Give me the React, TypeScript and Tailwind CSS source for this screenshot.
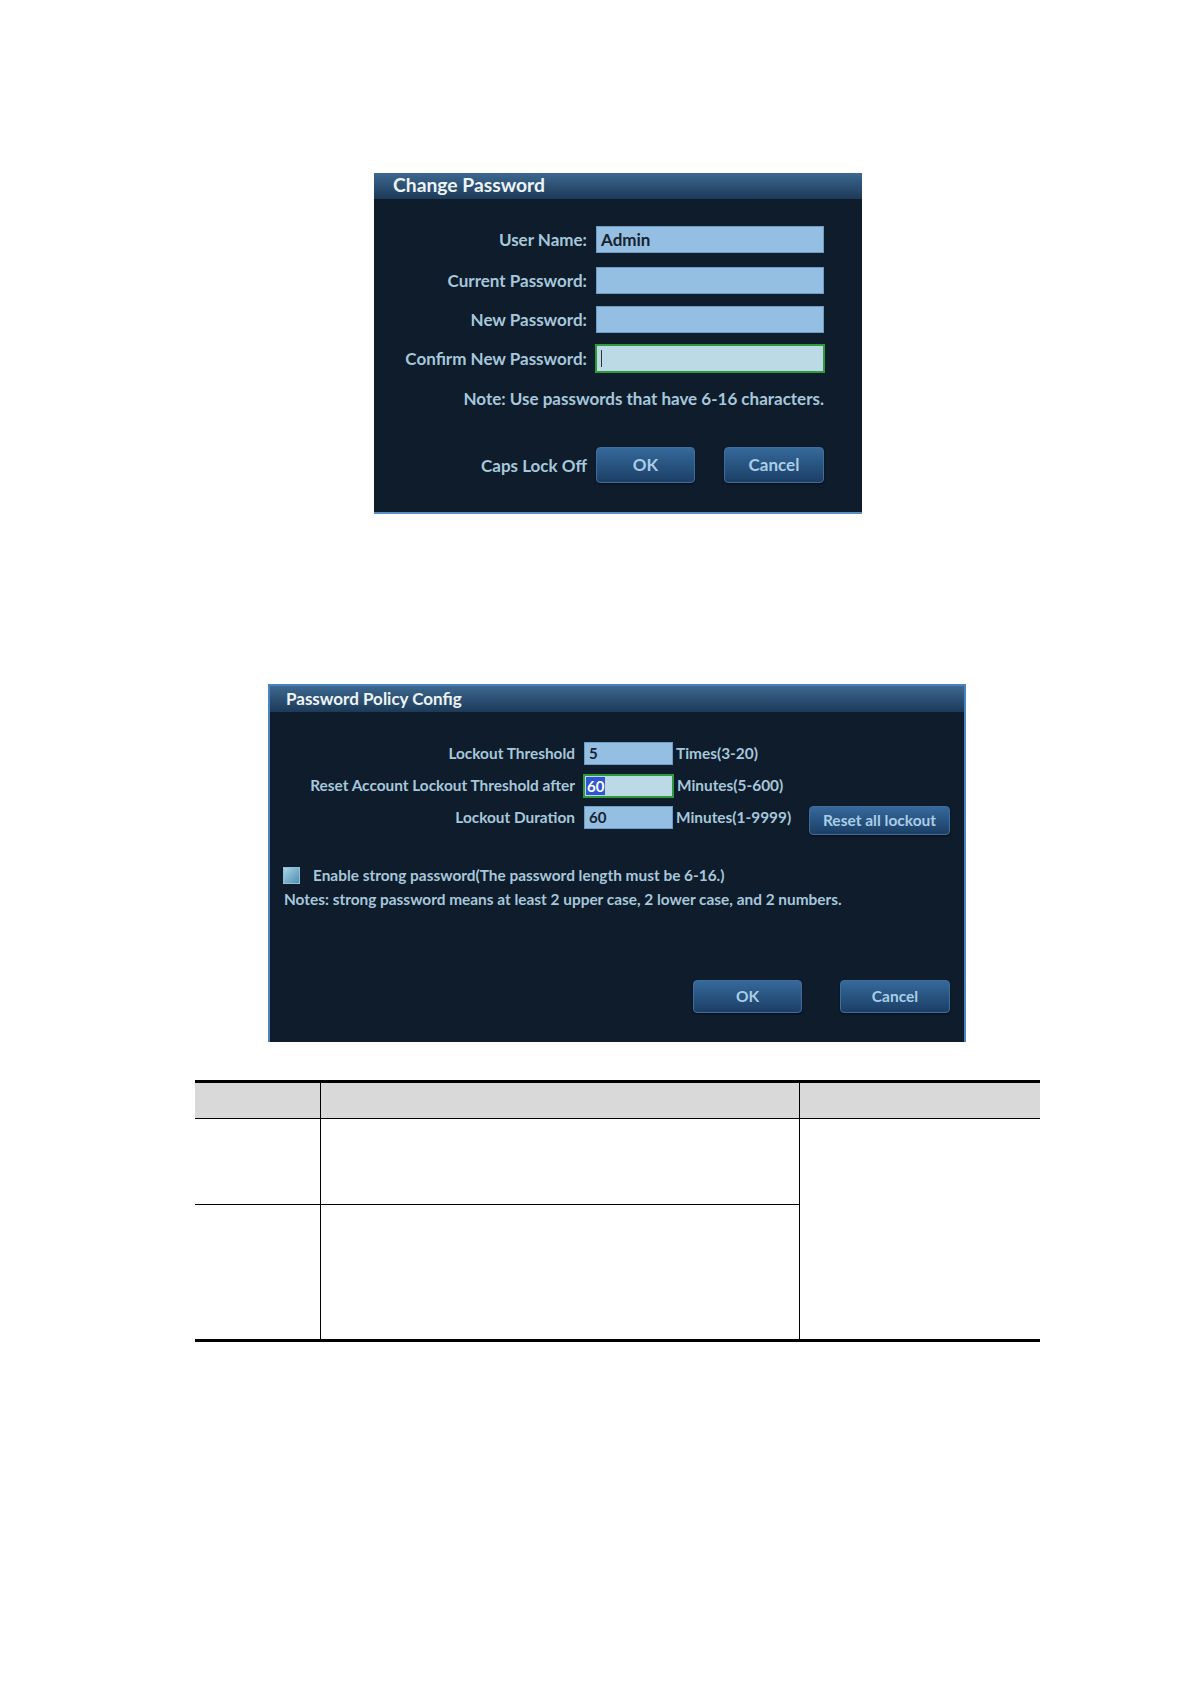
import React from "react";

const font = { fontFamily: "Lato, 'Open Sans', sans-serif" };

function Btn({ children, className }: { children: React.ReactNode; className: string }) {
  return (
    <div
      className={
        "flex items-center justify-center rounded-[4px] border border-[#3f6e9c] bg-gradient-to-b from-[#36699b] to-[#1b3f66] font-bold text-[#a9cde6] shadow-[0_1px_2px_rgba(0,0,0,0.6)] " +
        className
      }
    >
      {children}
    </div>
  );
}

function ChangePassword() {
  const rows = [
    { label: "User Name:", value: "Admin", mt: "mt-[27px]" },
    { label: "Current Password:", value: "", mt: "mt-[14px]" },
    { label: "New Password:", value: "", mt: "mt-[12px]" },
  ];
  return (
    <div className="ml-[374px] flex h-[341px] w-[488px] flex-col border-b-2 border-[#5b8fc4] bg-[#0e1c2c]">
      <div className="flex h-[26px] items-center bg-gradient-to-b from-[#3d6890] to-[#1d3a58] pb-[3px] pl-[19px] text-[19.3px] font-bold leading-none text-[#eef3f7]">
        Change Password
      </div>
      {rows.map((r) => (
        <div key={r.label} className={"flex items-center " + r.mt}>
          <div className="w-[213px] text-right text-[17px] font-bold leading-none text-[#a7c7da]">{r.label}</div>
          <div className="ml-[9px] flex h-[27px] w-[228px] items-center border border-[#6e9cc4] bg-[#94bfe2] pl-[4px] text-[17px] font-bold leading-none text-[#17222f]">
            {r.value}
          </div>
        </div>
      ))}
      <div className="mt-[11px] flex items-center">
        <div className="w-[213px] text-right text-[17px] font-bold leading-none text-[#a7c7da]">Confirm New Password:</div>
        <div className="ml-[8px] flex h-[29px] w-[230px] items-center border-2 border-[#2f9a3c] bg-[#bcd9e6] pl-[4px]">
          <div className="h-[17px] w-[1px] bg-[#333]" />
        </div>
      </div>
      <div className="mt-[17px] w-[450px] text-right text-[17px] font-bold leading-none text-[#a7c7da]">
        Note: Use passwords that have 6-16 characters.
      </div>
      <div className="mt-[40px] flex items-center">
        <div className="w-[213px] text-right text-[17px] font-bold leading-none text-[#a7c7da]">Caps Lock Off</div>
        <Btn className="ml-[9px] h-[36px] w-[99px] text-[17px]">OK</Btn>
        <Btn className="ml-[29px] h-[36px] w-[100px] text-[17px]">Cancel</Btn>
      </div>
    </div>
  );
}

function PolicyConfig() {
  const rows = [
    { label: "Lockout Threshold", value: "5", unit: "Times(3-20)", mt: "mt-[30px]", active: false },
    { label: "Reset Account Lockout Threshold after", value: "60", unit: "Minutes(5-600)", mt: "mt-[9px]", active: true },
    { label: "Lockout Duration", value: "60", unit: "Minutes(1-9999)", mt: "mt-[9px]", active: false },
  ];
  return (
    <div className="ml-[268px] flex h-[358px] w-[698px] flex-col border-x-2 border-t-2 border-[#4a82c4] bg-[#0e1c2c]">
      <div className="flex h-[26px] items-center bg-gradient-to-b from-[#3d6890] to-[#1d3a58] pb-[2px] pl-[16px] text-[17px] font-bold leading-none text-[#eef3f7]">
        Password Policy Config
      </div>
      {rows.map((r, i) => (
        <div key={r.label} className={"flex h-[23px] items-center " + r.mt}>
          <div className="w-[305px] text-right text-[15.4px] font-bold leading-none text-[#a7c7da]">{r.label}</div>
          {r.active ? (
            <div className="ml-[8px] flex h-[24px] w-[91px] items-center border-2 border-[#2f9a3c] bg-[#bcd9e6] pl-[1px]">
              <span className="bg-[#2f55d4] px-[1px] text-[15px] font-bold leading-[18px] text-white">60</span>
            </div>
          ) : (
            <div className="ml-[9px] flex h-[23px] w-[89px] items-center border border-[#6e9cc4] bg-[#94bfe2] pl-[4px] text-[15px] font-bold leading-none text-[#17222f]">
              {r.value}
            </div>
          )}
          <div className="ml-[3px] w-[133px] text-[15.4px] font-bold leading-none text-[#a7c7da]">{r.unit}</div>
          {i === 2 && <Btn className="mt-[6px] h-[29px] w-[141px] text-[15.5px]">Reset all lockout</Btn>}
        </div>
      ))}
      <div className="mt-[38px] flex items-center pl-[13px]">
        <div className="h-[17px] w-[17px] border border-[#8fc0d8] bg-gradient-to-br from-[#a9d4e6] to-[#4f8fb0]" />
        <div className="ml-[13px] text-[15.4px] font-bold leading-none text-[#a7c7da]">
          Enable strong password(The password length must be 6-16.)
        </div>
      </div>
      <div className="mt-[8px] pl-[14px] text-[15.4px] font-bold leading-none text-[#a7c7da]">
        Notes: strong password means at least 2 upper case, 2 lower case, and 2 numbers.
      </div>
      <div className="mt-[73px] flex">
        <Btn className="ml-[423px] h-[33px] w-[109px] text-[15.5px]">OK</Btn>
        <Btn className="ml-[38px] h-[33px] w-[110px] text-[15.5px]">Cancel</Btn>
      </div>
    </div>
  );
}

function DocTable() {
  return (
    <div className="ml-[195px] mt-[38px] w-[845px] border-t-[3px] border-b-[3px] border-black">
      <div className="grid grid-cols-[126px_479px_240px] grid-rows-[36px_86px_134px]">
        <div className="border-b border-r border-black bg-[#d9d9d9]" />
        <div className="border-b border-r border-black bg-[#d9d9d9]" />
        <div className="border-b border-black bg-[#d9d9d9]" />
        <div className="border-b border-r border-black" />
        <div className="border-b border-r border-black" />
        <div className="row-span-2" />
        <div className="border-r border-black" />
        <div className="border-r border-black" />
      </div>
    </div>
  );
}

export default function App() {
  return (
    <div className="h-[1684px] w-[1190px] bg-white pt-[173px]" style={font}>
      <ChangePassword />
      <div className="h-[170px]" />
      <PolicyConfig />
      <DocTable />
    </div>
  );
}
